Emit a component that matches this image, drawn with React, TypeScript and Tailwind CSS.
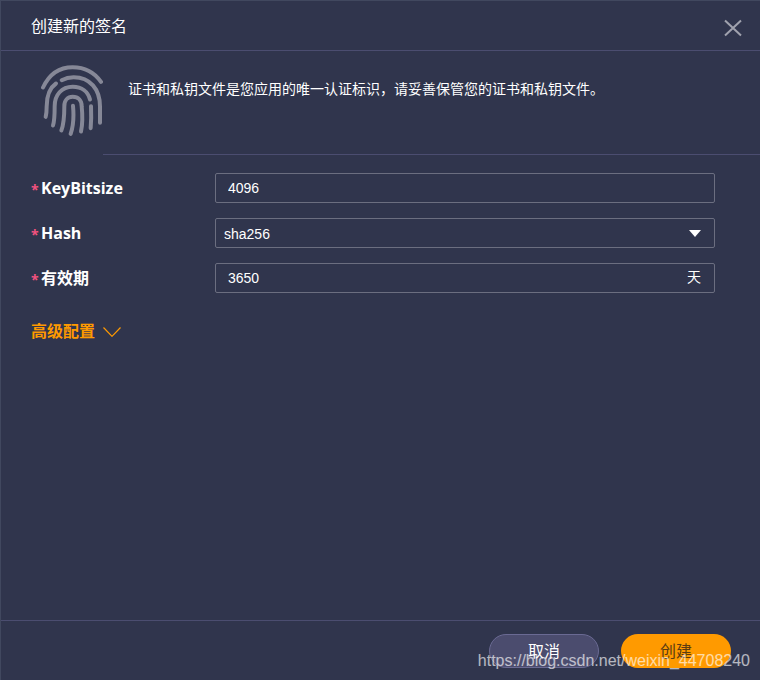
import type { ReactNode } from "react";

const fieldClass =
  "h-[30px] w-full appearance-none rounded-xs border border-[#6b6e80] bg-transparent text-sm text-white outline-none focus:border-[#8f93a8]";

function Fingerprint() {
  return (
    <svg
      viewBox="0 0 186 212"
      className="h-[71px] w-[62px] shrink-0"
      fill="none"
      stroke="#868897"
      strokeWidth="12"
      strokeLinecap="round"
      aria-hidden="true"
    >
      <path d="M6 67C25 26 57 6 95 6c37 0 65 15 85 44" />
      <path d="M62 45c13-7 24-9 36-9 49 0 79 36 79 88v49" />
      <path d="M45 55C22 71 17 95 17 124c0 11 0 20-3 31" />
      <path d="M36 181c5-16 5-35 5-58 0-34 21-58 54-58 28 0 46 15 52 38" />
      <path d="M150 123c1 23 1 44-1 66" />
      <path d="M61 196c8-21 9-41 9-73 0-17 10-28 25-28 17 0 27 11 27 28 3 29 3 53-2 76" />
      <path d="M96 122c3 32 2 58-7 84" />
    </svg>
  );
}

function FormRow({ id, label, children }: { id: string; label: string; children: ReactNode }) {
  return (
    <div className="flex items-center">
      <label htmlFor={id} className="flex w-46 shrink-0 items-center gap-0.5 font-bold text-white">
        <span className="w-2 pt-1 text-sm text-[#f4527f]">*</span>
        {label}
      </label>
      <div className="relative flex-1">{children}</div>
    </div>
  );
}

export default function App() {
  return (
    <main className="relative flex min-h-screen flex-col border-t border-l border-[#41485f] bg-[#30354d] font-['Open_Sans','Noto_Sans_CJK_SC',sans-serif] text-base leading-6 text-white">
      <header className="flex h-[50px] items-center justify-between border-b border-[#4b4d70] pr-[18px] pl-[30px]">
        <h1>创建新的签名</h1>
        <button type="button" aria-label="关闭" className="mt-1 cursor-pointer">
          <svg viewBox="0 0 18 18" className="size-[18px]" stroke="#a0a2ae" strokeWidth="2" aria-hidden="true">
            <path d="M1 1.5l16 15M17 1.5l-16 15" />
          </svg>
        </button>
      </header>

      <section className="flex-1">
        <div className="flex items-start gap-[25px] pt-3.5 pl-10">
          <Fingerprint />
          <p className="pt-3 text-sm leading-6">
            证书和私钥文件是您应用的唯一认证标识，请妥善保管您的证书和私钥文件。
          </p>
        </div>
        <hr className="mt-[18px] ml-[102px] border-[#4b4d70]" />

        <form className="pt-[18px] pr-[45px] pl-[30px]">
          <div className="flex flex-col gap-[15px]">
            <FormRow id="bits" label="KeyBitsize">
              <input id="bits" defaultValue="4096" className={`${fieldClass} px-3 font-['Liberation_Sans',sans-serif]`} />
            </FormRow>
            <FormRow id="hash" label="Hash">
              <select id="hash" className={`${fieldClass} px-2 pt-0.5 font-['Liberation_Sans',sans-serif]`}>
                <option>sha256</option>
              </select>
              <svg
                viewBox="0 0 12 7"
                className="pointer-events-none absolute top-3 right-3.5 h-[7px] w-3"
                fill="#fff"
                aria-hidden="true"
              >
                <path d="M0 0h12L6 7z" />
              </svg>
            </FormRow>
            <FormRow id="validity" label="有效期">
              <input id="validity" defaultValue="3650" className={`${fieldClass} pr-10 pl-3 font-['Liberation_Sans',sans-serif]`} />
              <span className="pointer-events-none absolute top-0.5 right-3.5 text-sm leading-6">天</span>
            </FormRow>
          </div>

          <button type="button" className="mt-[26px] flex cursor-pointer items-center gap-2 font-bold text-[#ff9a00]">
            高级配置
            <svg viewBox="0 0 18 10" className="mt-0.5 h-2.5 w-[18px]" fill="none" stroke="#ff9a00" strokeWidth="1.2" aria-hidden="true">
              <path d="M.5.5L9 9.3 17.5.5" />
            </svg>
          </button>
        </form>
      </section>

      <footer className="flex h-[60px] items-center justify-end gap-[22px] border-t border-[#4b4d70] pr-[29px]">
        <button
          type="button"
          className="h-[34px] w-[110px] cursor-pointer rounded-full border border-[#6a6a93] bg-[#4b4c6e] text-white"
        >
          取消
        </button>
        <button type="button" className="h-[34px] w-[110px] cursor-pointer rounded-full bg-[#ff9a00] text-[#5b3c12]">
          创建
        </button>
      </footer>

      <p className="pointer-events-none absolute right-2.5 bottom-[7px] font-['Liberation_Sans',sans-serif] text-base text-white/65">
        https://blog.csdn.net/weixin_44708240
      </p>
    </main>
  );
}
